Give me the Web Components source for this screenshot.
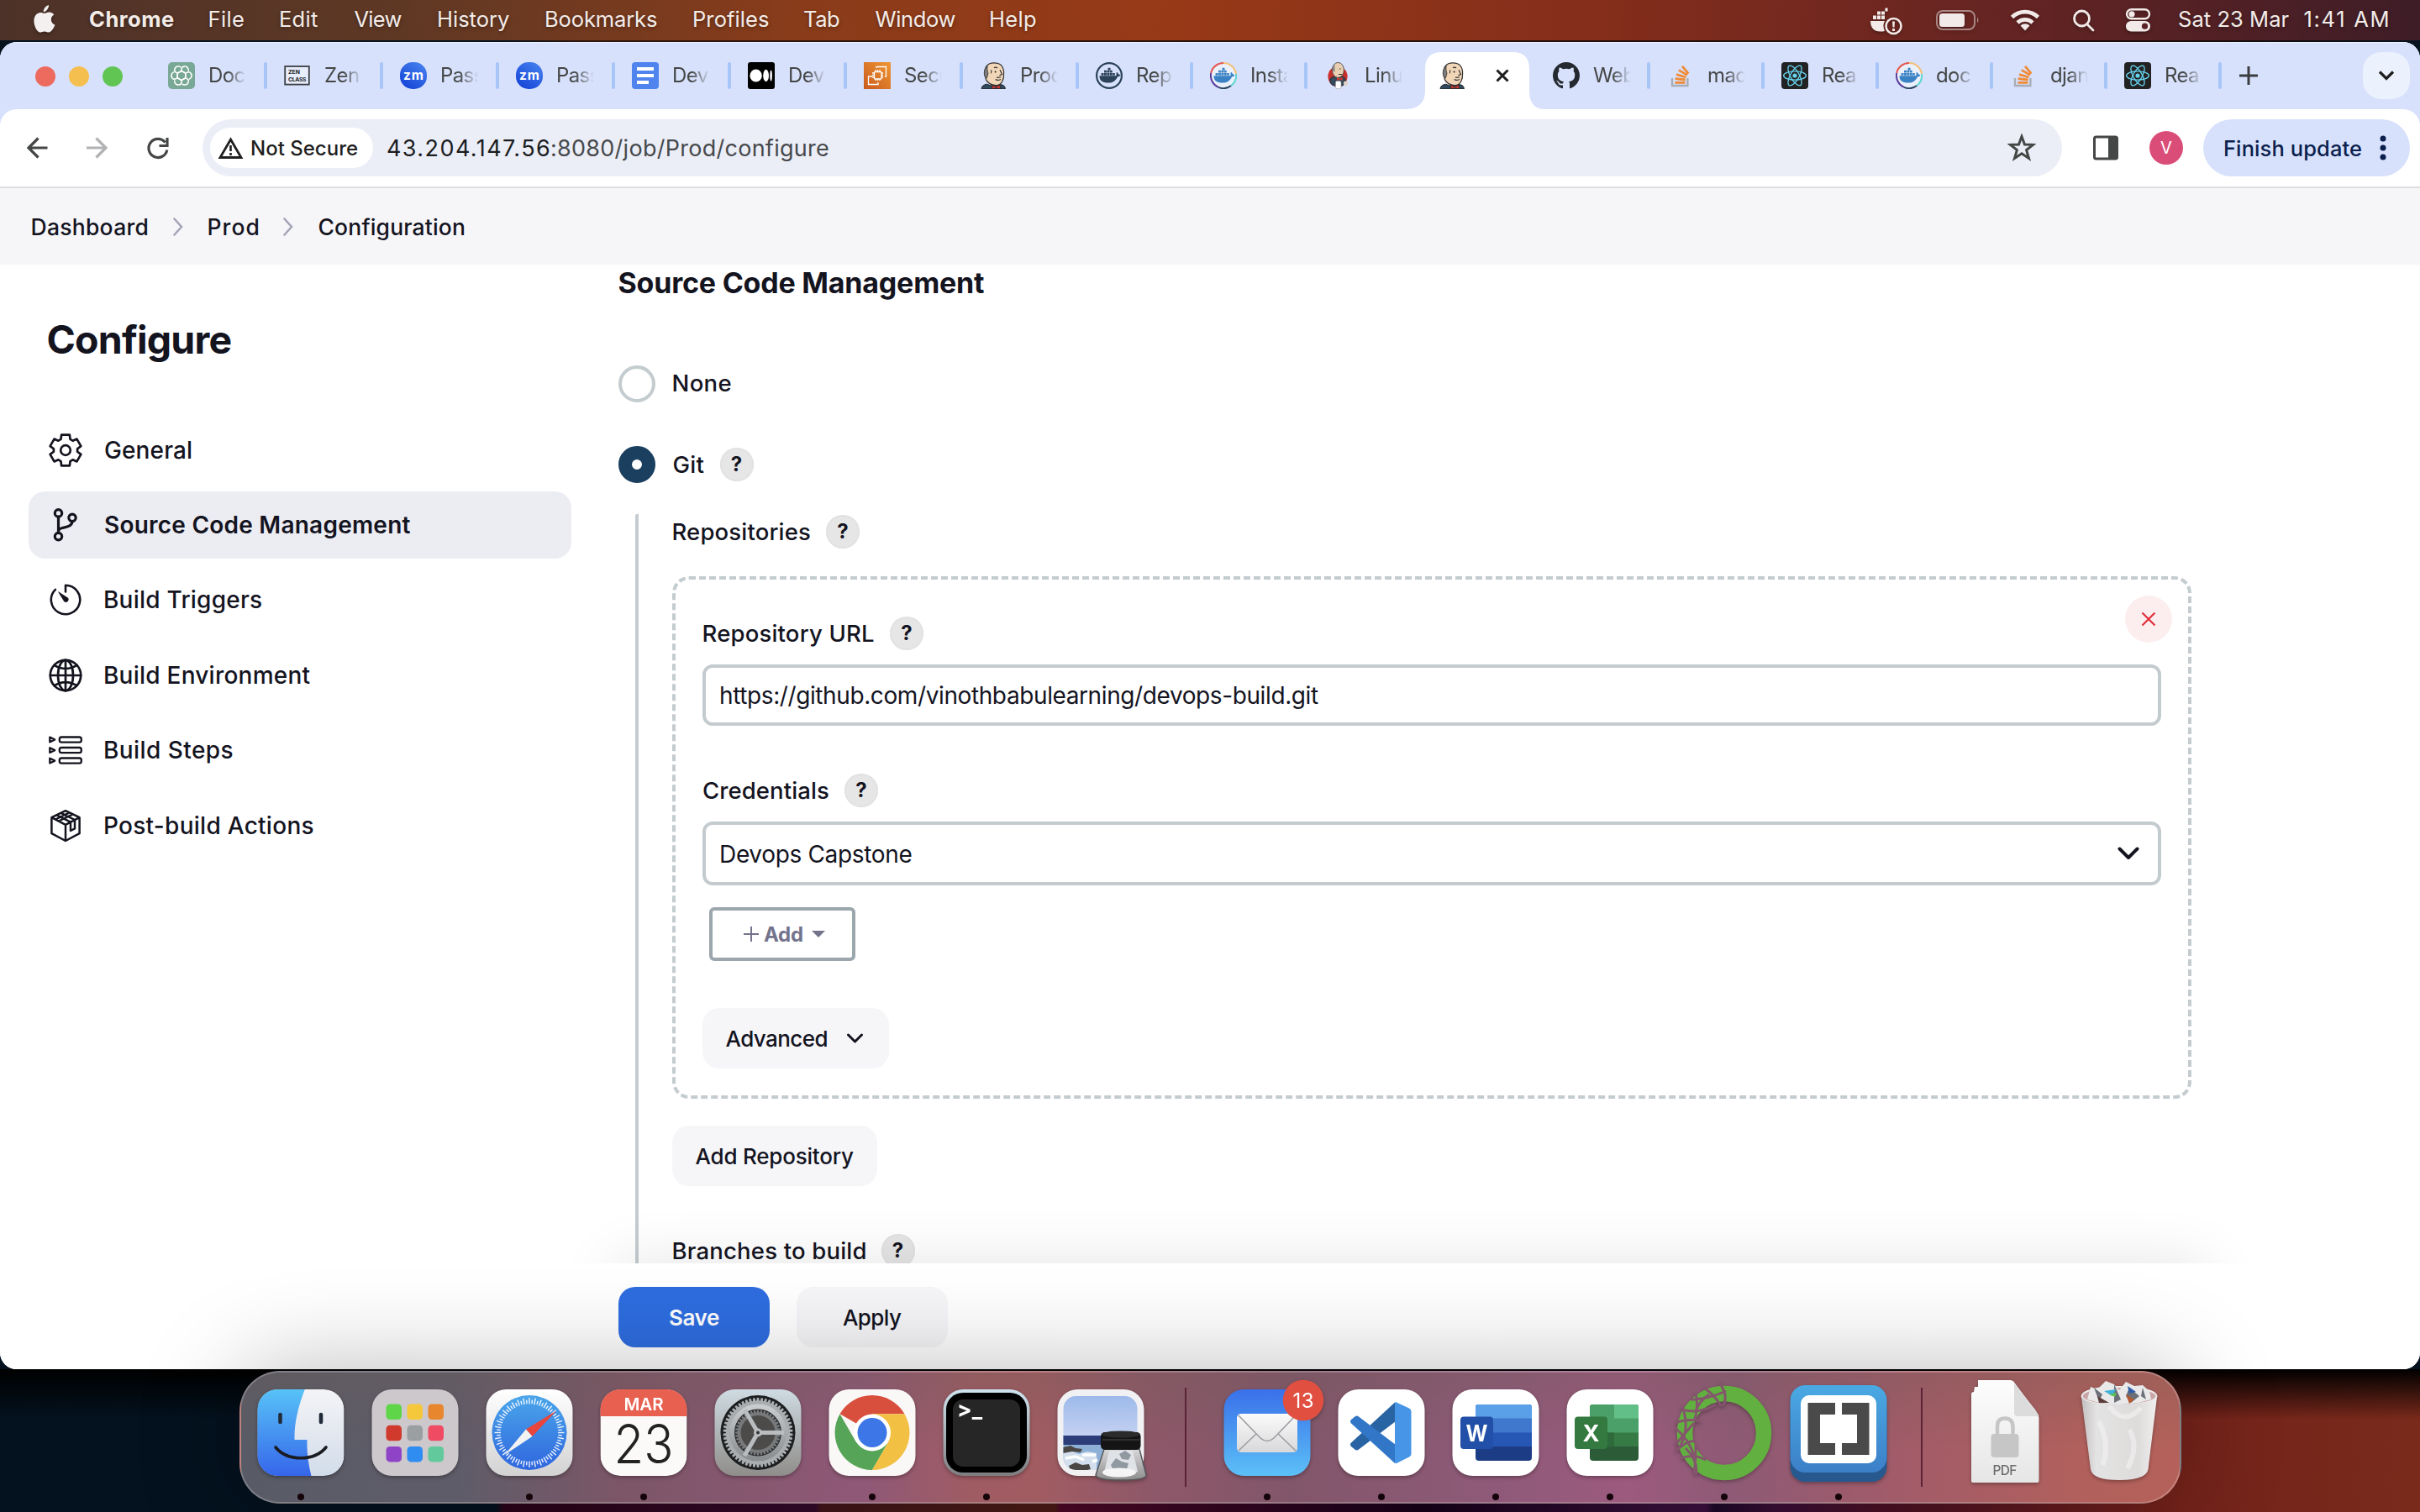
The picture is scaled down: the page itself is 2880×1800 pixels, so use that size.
<!DOCTYPE html>
<html lang="en">
<head>
<meta charset="utf-8">
<title>Prod Config [Jenkins]</title>
<style>
html,body{margin:0;padding:0}
body{width:2880px;height:1800px;overflow:hidden;font-family:Inter,"Noto Sans","Liberation Sans",sans-serif;font-optical-sizing:none;color:#14141f}
</style>
</head>
<body>
<mac-desktop></mac-desktop>
<script>
const define = (name, css, html, setup) => customElements.define(name, class extends HTMLElement {
  connectedCallback() {
    if (this.shadowRoot) return;
    const root = this.attachShadow({ mode: 'open' });
    const body = typeof html === 'function' ? html(this) : html;
    root.innerHTML = `<style>*{box-sizing:border-box}svg{display:block}${css}</style>${body}`;
    if (setup) setup(this, root);
  }
});

/* ---------- shapes ---------- */
const gear = (n, cx, cy, ro, ri, ao, ai, from = 0) => {
  let d = '';
  const p = (r, a) => `${(cx + r * Math.sin(a)).toFixed(2)} ${(cy - r * Math.cos(a)).toFixed(2)}`;
  for (let i = 0; i < n; i++) {
    const a = from + i * 2 * Math.PI / n;
    d += `${i ? 'L' : 'M'}${p(ri, a - ai)}L${p(ro, a - ao)}L${p(ro, a + ao)}L${p(ri, a + ai)}`;
  }
  return d + 'Z';
};
const whale = (c) => `<g fill="${c}"><path d="M4.5 16.3H23.6C24.6 16 25 14.8 24.4 13.2C24.6 12.4 25.2 12 25.5 12C26.6 12.8 27 13.8 27 14.6C28 14.5 29 14.8 29.5 15.2C28.8 16.6 27.6 17.3 26 17.2C24.2 21.8 20.6 24.6 14.6 24.6C8.4 24.6 4.2 22 4.5 16.3Z"/><path d="M6.6 13h2.9v2.8H6.6zM10 13h2.9v2.8H10zM13.4 13h2.9v2.8h-2.9zM16.8 13h2.9v2.8h-2.9zM20.2 13h2.6v2.8h-2.6zM10 9.8h2.9v2.8H10zM13.4 9.8h2.9v2.8h-2.9zM16.8 9.8h2.9v2.8h-2.9zM14.6 6.8h2.9v2.6h-2.9z"/></g>`;
const butler = `<path d="M2.2 32C2 28.5 4.6 26.8 8.5 26.2L13 28L24 26.5C28.5 27 30.4 28.8 30.2 32Z" fill="#2f4a5c" stroke="#222" stroke-width="1"/>
<path d="M6 15C5 6 9 .8 17 .8C25.5 .8 28.8 6 28.6 13.5C29 20 26.4 27.4 19.5 27.6C13.5 27.8 8.2 24 7.2 20Z" fill="#f0d6b7" stroke="#333" stroke-width="1.2"/>
<path d="M6 17C4.4 12.5 5.6 7.4 9.2 4.4C8.6 8 9 10.2 10 13.4L8.4 19Z" fill="#7d7d7d" stroke="#333" stroke-width=".8"/>
<path d="M17 6.6Q19.5 5.4 21 7M13.4 9.4Q14.6 11.6 13.2 13.4M24 9.2L26.6 14.4L23.4 16M18.6 20.6Q21.4 22.4 25 20.4M20 18.4L25 18" fill="none" stroke="#333" stroke-width="1.2"/>
<circle cx="18.6" cy="11.6" r="1" fill="#222"/>
<path d="M14.6 27.4L19 29.2L24 27.2L24.6 32L19.6 30.6L15 32Z" fill="#d33a33" stroke="#222" stroke-width=".7"/>`;
const dockerRing = `<circle cx="16" cy="16" r="15" fill="#eaf0fc"/><g fill="none" stroke-width="2"><path d="M16 1A15 15 0 0 1 31 14" stroke="#f5bf72"/><path d="M31 14A15 15 0 0 1 25 28" stroke="#5fd8d0"/><path d="M25 28A15 15 0 0 1 10 29.8" stroke="#2b4560"/><path d="M10 29.8A15 15 0 0 1 1.2 13" stroke="#5b3f9b"/><path d="M1.2 13A15 15 0 0 1 16 1" stroke="#e5574f"/></g>${whale('#3b82c4')}`;
const zoomI = `<defs><linearGradient id="z" x1="1" y1="0" x2=".3" y2="1"><stop offset="0" stop-color="#4a86f0"/><stop offset="1" stop-color="#1746d8"/></linearGradient></defs><rect width="32" height="32" rx="15" fill="url(#z)"/><text x="16" y="20.6" font-size="15.5" font-weight="700" fill="#fff" text-anchor="middle" textLength="24">zm</text>`;
const react = `<rect width="32" height="32" rx="4" fill="#222"/><g fill="none" stroke="#68d3ef" stroke-width="1.3"><ellipse cx="16" cy="16" rx="13.4" ry="5.2"/><ellipse cx="16" cy="16" rx="13.4" ry="5.2" transform="rotate(60 16 16)"/><ellipse cx="16" cy="16" rx="13.4" ry="5.2" transform="rotate(120 16 16)"/></g><circle cx="16" cy="16" r="2.6" fill="#68d3ef"/>`;
const stack = `<path d="M6 19V28H24.4V19" fill="none" stroke="#a9adb4" stroke-width="2.4"/><g stroke="#f08a35" stroke-width="2.8"><path d="M9.4 24.3H21.4M9.6 19.6L21.6 21M11 14.6L22.4 18M13.8 9.4L24 15.4M18 4.8L25.4 13.6" /></g>`;
const gpt = (() => { let s = ''; for (let i = 0; i < 6; i++) s += `<path d="M16 10.4L20.8 13.2V18.6M16 10.4V8.6C16 4.4 21.8 3.4 23.9 7.6C24.3 8.6 24.3 9.6 24.2 10.6" transform="rotate(${i * 60} 16 16)"/>`; return s; })();
const FAV = {
  gpt: `<rect width="32" height="32" rx="5" fill="#79a896"/><g fill="none" stroke="#fff" stroke-width="1.5">${gpt}</g>`,
  zen: `<rect x="1.2" y="5" width="28.6" height="21.6" fill="#e7edfb" stroke="#3c3f45" stroke-width="1.800"/><text x="5" y="13.6" font-size="6.800" font-weight="700" fill="#222">ZEN</text><text x="5" y="22.6" font-size="6.800" font-weight="700" fill="#222" textLength="21.500">CLASS</text>`,
  zoom: zoomI,
  docs: `<rect width="32" height="32" rx="4" fill="#4f83ee"/><path d="M6 6h20v4H6zM6 14h20v4H6zM6 22h14v4H6z" fill="#fff"/>`,
  medium: `<rect width="32" height="32" rx="3" fill="#000"/><ellipse cx="9.6" cy="16" rx="7.2" ry="7.6" fill="#fff"/><ellipse cx="21.6" cy="16" rx="3.4" ry="7.2" fill="#fff"/><ellipse cx="27.6" cy="16" rx="1.3" ry="6.6" fill="#fff"/>`,
  aws: `<defs><linearGradient id="a" x1="0" y1="1" x2="1" y2="0"><stop offset="0" stop-color="#c85b20"/><stop offset="1" stop-color="#ef9632"/></linearGradient></defs><rect width="32" height="32" fill="url(#a)"/><g fill="none" stroke="#fff" stroke-width="1.3"><rect x="12.500" y="11.500" width="8.500" height="8.500" rx="1"/><path d="M14 11V9M16.500 11V9M19 11V9M14 20v2M16.500 20v2M19 20v2M12 13h-2M12 15.500h-2M12 18h-2M21 13h2M21 15.500h2M21 18h2"/><path d="M15 7V5.500H26.500V17H25M10 17H5.500V26.500H17V24"/></g>`,
  butler,
  dockerDark: `<circle cx="16" cy="16" r="14.900" fill="none" stroke="#2b4257" stroke-width="2.200"/>${whale('#2b4257')}`,
  dockerRing,
  jenkins: `<ellipse cx="16" cy="17" rx="11.600" ry="12" fill="#c9302c"/><path d="M7 20Q9 16.500 15 17.500L22 17Q26 19 25.500 25L22 28H11Q6 26 7 20Z" fill="#34495a" stroke="#222" stroke-width=".7"/><ellipse cx="16.400" cy="9.400" rx="7" ry="9" fill="#e9cfb2" stroke="#444" stroke-width=".9"/><path d="M10 10Q9 4 12.500 1.800L12.500 12Z" fill="#888"/><path d="M17 14.500h4M18 8h1.500" stroke="#333"/><path d="M15 18l3 1.500l3.500-1.500v4l-3.500-1.500l-3 1.500z" fill="#d33a33"/><rect x="13.500" y="22.500" width="6.500" height="9.200" rx="1.500" fill="#fff" stroke="#999" stroke-width=".6"/><circle cx="25.500" cy="25" r="2.600" fill="#dfd3c8"/>`,
  github: `<path transform="scale(2)" fill="#24292f" d="M8 0C3.580 0 0 3.580 0 8c0 3.540 2.290 6.530 5.470 7.590.4.070.55-.17.55-.38 0-.19-.01-.82-.01-1.490-2.010.37-2.530-.49-2.690-.94-.09-.23-.48-.94-.82-1.130-.28-.15-.68-.52-.01-.53.63-.01 1.080.58 1.230.82.72 1.210 1.870.87 2.330.66.07-.52.28-.87.51-1.070-1.780-.2-3.640-.89-3.640-3.950 0-.87.31-1.590.82-2.150-.08-.2-.36-1.020.08-2.120 0 0 .67-.21 2.200.82.64-.18 1.320-.27 2-.27s1.360.09 2 .27c1.530-1.040 2.200-.82 2.200-.82.44 1.100.16 1.920.08 2.120.51.56.82 1.270.82 2.150 0 3.070-1.870 3.750-3.650 3.950.29.25.54.73.54 1.480 0 1.070-.01 1.930-.01 2.200 0 .21.15.46.55.38A8.010 8.010 0 0 0 16 8c0-4.420-3.580-8-8-8Z"/>`,
  stack, react
};
const S = (d, w = 3) => `<g fill="none" stroke="currentColor" stroke-width="${w}" stroke-linecap="round" stroke-linejoin="round">${d}</g>`;
const NAV = {
  gear: S(`<path d="${gear(6, 20, 20, 19, 14.2, .26, .4)}"/><circle cx="20" cy="20" r="5.800"/>`, 2.7),
  branch: S(`<circle cx="11.500" cy="5.900" r="4.200"/><circle cx="28" cy="11.300" r="4.200"/><circle cx="11.500" cy="33.600" r="4.200"/><path d="M11.500 10V29.400M28 15.500C28 21.500 21 22.500 16 23.500C13 24.200 11.500 25.500 11.500 28"/>`, 3.2),
  timer: S(`<path d="M20 10.500V2.800A17.200 17.200 0 1 1 7.900 7.800"/>`, 2.6) + `<path d="M11.200 10.800Q10.800 10 11.900 10.400L22.600 17.600A3.100 3.100 0 0 1 18.200 22Z" fill="currentColor"/>`,
  globe: S(`<circle cx="20" cy="20" r="18.200"/><ellipse cx="20" cy="20" rx="9" ry="18.200"/><path d="M20 1.800V38.200M1.800 20H38.200M6.600 7.800Q20 16 33.400 7.800M6.600 32.200Q20 24 33.400 32.200"/>`, 2.7),
  steps: S(`<rect x="12.800" y="4.500" width="26" height="6.200" rx="2.400"/><rect x="12.800" y="17" width="26" height="6.200" rx="2.400"/><rect x="12.800" y="29.500" width="26" height="6.200" rx="2.400"/><path d="M1.300 4.600V10.400L7.200 7.500ZM1.300 17.200V23L7.200 20.100ZM1.300 29.700V35.500L7.200 32.600Z"/>`, 2.3),
  box: S(`<path d="M20 2.200L36.600 10.200V29.200L20 38L3.400 29.200V10.200ZM3.400 10.200L20 18.800L36.600 10.200M20 18.800V38M9.500 7.400L26 15.600V26L31 23.400V13M14.500 4.900L31 13M12 14.500L28.500 6.400M8 12.500L24.500 4.400"/>`, 2.5)
};

/* Dock artwork: x is measured from the middle of the cell, y from the top of the dock. */
const tile = (f, x = '') => `<rect x="-51.500" y="22" width="103" height="103" rx="24" fill="${f}" ${x}/>`;
const lg = (id, a, b) => `<linearGradient id="${id}" x1="0" y1="0" x2="0" y2="1"><stop offset="0" stop-color="${a}"/><stop offset="1" stop-color="${b}"/></linearGradient>`;
const ticks = (() => { let s = ''; for (let i = 0; i < 72; i++) s += `<path d="M0 ${i % 2 ? -39 : -41.500}V${i % 2 ? -34.500 : -34}" transform="translate(0 73.500) rotate(${i * 5})"/>`; return s; })();
const pads = ['#5fd64a', '#f5c83c', '#e8862e', '#cf3a2c', '#9aa0a2', '#ef4c64', '#8f44c8', '#2f8df2', '#62c99c'];
const DOCK = {
  finder: `<defs>${lg('f', '#58c4f8', '#3564ea')}${lg('w', '#f4f4f6', '#d2dcea')}<clipPath id="c">${tile('#000')}</clipPath></defs><g clip-path="url(#c)">${tile('url(#w)')}<path d="M-52 20H5.500C-3 42 -8 62 -7.500 82H7.500C7 98 9 112 13 127H-52Z" fill="url(#f)"/></g><path d="M-24.500 52V61M24 52V61" stroke="#222b3a" stroke-width="4.600" stroke-linecap="round"/><path d="M-30 91C-16 108 16 108 30 91" fill="none" stroke="#1b1b22" stroke-width="3.600" stroke-linecap="round"/>`,
  launchpad: tile('#cdc8cc') + pads.map((c, i) => `<rect x="${-34.500 + (i % 3) * 25}" y="${39.500 + (i / 3 | 0) * 25.200}" width="18.500" height="18.500" rx="4.500" fill="${c}"/>`).join(''),
  safari: `<defs>${lg('s', '#ffffff', '#d2d2d2')}${lg('b', '#4aa6ea', '#2f66de')}</defs>${tile('url(#s)')}<circle cy="73.500" r="44.500" fill="url(#b)"/><g stroke="#fff" stroke-width="1.400" opacity=".9">${ticks}</g><path d="M32 47.500L-4 69.500L3.500 78Z" fill="#e8463c"/><path d="M-4 69.500L3.500 78L-29.500 100Z" fill="#f2f2f2"/>`,
  calendar: `<defs><clipPath id="c">${tile('#000')}</clipPath></defs><g clip-path="url(#c)">${tile('#fbfaf8')}<rect x="-52" y="22" width="104" height="32" fill="#e8604f"/></g><text y="46.500" font-size="20.500" font-weight="600" fill="#fff" text-anchor="middle" textLength="47">MAR</text><text y="110" font-size="64" font-weight="300" fill="#222" text-anchor="middle" textLength="71" lengthAdjust="spacingAndGlyphs">23</text>`,
  settings: `<defs>${lg('g', '#cfdbe2', '#8f8d8a')}${lg('h', '#c9ccce', '#8b8e90')}</defs>${tile('url(#g)')}<circle cy="73.500" r="44.500" fill="#1d1e20"/><path d="${gear(54, 0, 73.500, 41.500, 38, .03, .045)}" fill="#a9adb0"/><circle cy="73.500" r="33.500" fill="#2b2c2e"/><circle cy="73.500" r="31" fill="none" stroke="url(#h)" stroke-width="6"/><circle cy="73.500" r="24.500" fill="#3a3b3d"/><path d="${gear(40, 0, 73.500, 27, 24, .04, .06)}" fill="#77797b"/><circle cy="73.500" r="20.500" fill="#4c4b4a"/><g stroke="#b9bdc0" stroke-width="5"><path d="M0 73.500H31M0 73.500L-16 46M0 73.500L-16 101"/></g><circle cy="73.500" r="5" fill="#b9bdc0"/><circle cy="73.500" r="2" fill="#333"/>`,
  chrome: `${tile('#faf7f7')}<g transform="translate(0 73.500)"><path d="M0 0L-38.500 -22.250A44.500 44.500 0 0 1 38.500 -22.250L0 -22.250Z" fill="#d94f3d"/><path d="M-38.500 -22.250A44.500 44.500 0 0 0 0 44.500L19.300 11.100L-19.300 11.100Z" fill="#55a457"/><path d="M38.500 -22.250A44.500 44.500 0 0 1 0 44.500L19.300 11.100L0 -22.250Z" fill="#f2c043"/><circle r="22" fill="#fff"/><circle r="17.500" fill="#3d76e6"/></g>`,
  terminal: `<defs>${lg('t', '#cfe4ef', '#7e7e80')}</defs>${tile('url(#t)')}<rect x="-48" y="26" width="96" height="95" rx="20" fill="#000"/><rect x="-40" y="34" width="80" height="80" rx="12" fill="#262626"/><text x="-35" y="54.500" font-family="Liberation Mono" font-size="26" font-weight="700" fill="#fff">&gt;_</text>`,
  preview: `<defs>${lg('k', '#9db9ea', '#c5d2f2')}${lg('j', '#d8d8da', '#8e8e8e')}<clipPath id="c"><rect x="-44.500" y="30" width="88" height="88" rx="15"/></clipPath></defs>${tile('#f1f1f3')}<g clip-path="url(#c)"><rect x="-45" y="30" width="90" height="48" fill="url(#k)"/><rect x="-45" y="77" width="90" height="42" fill="#8fb0d6"/><rect x="-45" y="77" width="90" height="11" fill="#2c3c78"/><path d="M-45 98L-36 95L-26 99L-16 96L-5 98V119H-45Z" fill="#d3dfec"/><path d="M-45 91L-36 89L-30 92L-22 93L-24 97L-34 96L-45 98ZM-38 113L-30 109L-22 112L-14 111L-12 117L-20 119H-36Z" fill="#4a4644"/><path d="M-42 104L-30 102L-20 106M-22 100L-6 100M-10 108L-4 106" fill="none" stroke="#fff" stroke-width="3.500"/></g><path d="M4 93H46L54 124Q54 130 24 130Q-4 130 -6 124Z" fill="url(#j)" stroke="#55585c" stroke-width="1.500"/><path d="M10 95H38L44 120Q26 127 4 121Z" fill="#dfe3e8"/><path d="M22 99l7-4l7 5l-3 6l-8-1zM12 112l6-8l7 4l8 2l-2 7l-16 1z" fill="#9098a0"/><ellipse cx="22" cy="121" rx="20" ry="5.500" fill="#f5f5f5"/><rect x="0" y="73" width="47.500" height="21" rx="5" fill="#151515"/><ellipse cx="24" cy="75.500" rx="23" ry="4" fill="#2b2b2b"/><path d="M2 82H46" stroke="#3a3a3a" stroke-width="1.500"/>`,
  mail: `<defs>${lg('m', '#3970ea', '#5cc0f7')}${lg('e', '#fbfbfb', '#d8d8da')}</defs>${tile('url(#m)')}<rect x="-36" y="51" width="72" height="46" rx="5" fill="url(#e)"/><path d="M-34 95L-13 75M34 95L13 75M-34 53L-8 80Q0 87 8 80L34 53" fill="none" stroke="#9b9da0" stroke-width="1.600"/><circle cx="43" cy="35" r="24.300" fill="#e14f41"/><text x="43" y="43.500" font-size="24" fill="#fff" text-anchor="middle" textLength="25">13</text>`,
  vscode: `${tile('#fff')}<path d="M16 37.500L-36.500 86Q-38 88 -36 90L-31 94Q-29 95 -27 93.500L17 60Z" fill="#2863a4"/><path d="M16 110L-36.500 62Q-38 60 -36 58L-31 54Q-29 53 -27 54.500L17 88Z" fill="#3277c7"/><path d="M16 37.500Q17 37 18 37.500L33 44.500Q35.500 46 35.500 48V99Q35.500 101 33 102.500L18 110Q16 110.500 16 109V37.500Z" fill="#4795e6"/>`,
  word: `${tile('#fff')}<rect x="-24" y="40" width="67" height="67" rx="4" fill="#1c3d85"/><path d="M-24 90V44Q-24 40 -20 40H39Q43 40 43 44V90Z" fill="#2757b4"/><path d="M-24 73.500V44Q-24 40 -20 40H39Q43 40 43 44V73.500Z" fill="#3f78cc"/><path d="M-24 56.500V44Q-24 40 -20 40H39Q43 40 43 44V56.500Z" fill="#5aa0e8"/><rect x="-42" y="54.500" width="39" height="38.500" rx="4" fill="#2250a8"/><text x="-22.500" y="83.500" font-size="27" font-weight="700" fill="#fff" text-anchor="middle" textLength="26" lengthAdjust="spacingAndGlyphs">W</text>`,
  excel: `${tile('#fff')}<rect x="-24" y="40" width="58" height="67" rx="4" fill="#2b5c37"/><path d="M-24 90V44Q-24 40 -20 40H30Q34 40 34 44V90Z" fill="#367a45"/><path d="M-24 73.500V44Q-24 40 -20 40H5V73.500Z" fill="#4b9f68"/><path d="M5 73.500V40H30Q34 40 34 44V73.500Z" fill="#4b9f68"/><path d="M5 56.500V40H30Q34 40 34 44V56.500Z" fill="#63bf88"/><path d="M-24 73.500H5V90H-24Z" fill="#2e6a3c"/><rect x="-42" y="54.500" width="39" height="38.500" rx="4" fill="#34793f"/><text x="-22.500" y="83.500" font-size="27" font-weight="700" fill="#fff" text-anchor="middle">X</text>`,
  anaconda: `<circle cy="74" r="47" fill="none" stroke="#62b03f" stroke-width="18.500"/><g fill="none" stroke="#85556e" stroke-width="3"><path d="M-6 14Q6 30 -2 42M-24 20Q-10 30 -4 42M-40 34Q-20 34 2 24M-50 46Q-30 52 -10 40M-34 26Q-30 44 -36 60M-58 62Q-44 56 -28 60M-50 42Q-40 70 -54 92M-58 68Q-40 84 -36 102M-36 62Q-50 78 -58 88M-58 96Q-44 82 -36 84M-52 104Q-36 98 -22 106M-46 92Q-30 108 -34 124M-34 88Q-34 110 -36 122M-18 28Q-30 36 -34 48"/></g>`,
  brackets: `<defs>${lg('r', '#4aa9e2', '#3c7fc8')}</defs><rect x="-57.500" y="30" width="115" height="102" rx="18" fill="#27598f"/><rect x="-57.500" y="17" width="115" height="104" rx="18" fill="url(#r)"/><rect x="-45" y="29" width="90" height="81" rx="10" fill="#fff"/><path d="M-36.500 38H-4V52H-22V86H-4V100H-36.500ZM36.500 38H4V52H22V86H4V100H36.500Z" fill="#4a4a4a"/>`,
  pdf: `<defs>${lg('p', '#fdfdfd', '#e6e6e6')}</defs><path d="M-32 11H5L12 24H-36V19H-32Z" fill="#ececec"/><path d="M-40 28Q-40 25 -37 25L-36 19H-32V11H6Q10 11 12 15L37 48Q40.500 52 40.500 56V131Q40.500 133 38.500 133H-38Q-40 133 -40 131Z" fill="url(#p)"/><path d="M11 15V50Q11 54 15 54H40.500Q38 50 36 46Z" fill="#dcdcdc"/><path d="M-9 76V66Q-9 56.500 0 56.500T9.500 66V76" fill="none" stroke="#c6c6c6" stroke-width="4.500"/><rect x="-16.500" y="75" width="33" height="28" rx="4" fill="#c6c6c6"/><text y="123.500" font-size="15.500" font-weight="500" fill="#6d6d6d" text-anchor="middle" textLength="29">PDF</text>`,
  trash: `<defs><linearGradient id="q"><stop offset="0" stop-color="#c3bfc0"/><stop offset=".2" stop-color="#e4e3e3"/><stop offset=".75" stop-color="#dddcdb"/><stop offset="1" stop-color="#f0eeee"/></linearGradient></defs><ellipse cy="30" rx="44.500" ry="11" fill="#c9a5a6" stroke="#eee" stroke-width="2"/><path d="M-38 34L-34 19L-26 22L-16 12L-6 16L0 23L8 13L18 18L28 17L36 24L38 34Q0 46 -38 34Z" fill="#e9e9ea"/><path d="M-30 20L-20 28L-24 36ZM-6 16L2 34L-6 38ZM12 20L24 30L14 38L8 30ZM28 20L32 34L26 30Z" fill="#6b6f78"/><path d="M-18 24L-4 22L-8 30Z" fill="#3fb0d8"/><path d="M-12 28L-3 26L-5 31Z" fill="#5dc050"/><path d="M8 28L18 34L12 39Z" fill="#b55a33"/><path d="M10 18L20 25L12 27Z" fill="#2f5ca8"/><path d="M-26 30L-12 38H-24Z" fill="#5a3c3c"/><path d="M-45 31Q-40 40 0 40T45 31L34.500 117Q32 130 0 130T-34 117Z" fill="url(#q)"/><path d="M-12 42Q6 66 26 44M-24 60Q-10 90 -20 112M12 70Q24 90 10 116" fill="none" stroke="#f3f2f2" stroke-width="6" opacity=".6"/>`
};

/* ---------- primitives ---------- */
define('tab-icon', ':host{display:block;width:32px;height:32px;flex:none}text{font-family:Inter,sans-serif}',
  el => `<svg width="32" height="32" viewBox="0 0 32 32">${FAV[el.getAttribute('name')]}</svg>`);
define('help-dot', `:host{display:flex;width:40px;height:40px;border-radius:50%;background:#e6e6e6;align-items:center;justify-content:center;font-size:24px;font-weight:700;line-height:40px;flex:none;box-shadow:inset 0 0 0 2px #e2e2e2}`, '<span>?</span>');
define('soft-button', `:host{display:flex;height:72px;border-radius:20px;background:#f6f6f9;align-items:center;font-size:26px;font-weight:500;flex:none;padding-top:1px;box-sizing:border-box}
:host([primary]){background:#2e6de0;color:#fff;font-weight:600}`, '<slot></slot>');
define('radio-mark', `:host{display:block;width:44px;height:44px;border-radius:50%;border:4px solid #c4cccf;box-sizing:border-box;background:#fff;flex:none}
:host([checked]){border:16px solid #1b3f5f}`, '');
define('field-label', `:host{display:flex;height:40px;align-items:center;gap:19px;font-size:27.500px;font-weight:500}`, '<slot></slot><help-dot></help-dot>');
define('text-field', `:host{display:flex;align-items:center;justify-content:space-between;border:4px solid #c4cbcf;border-radius:12px;box-sizing:border-box;padding:0 22px 0 18px;font-size:28px;background:#fff}`, '<slot></slot>');

/* ---------- menu bar ---------- */
define('menu-bar', `:host{display:flex;height:48px;align-items:center;padding:0 0 2px 40px;box-sizing:border-box;color:#f3ece8;font-size:25.500px;line-height:46px;text-shadow:0 2px 4px rgba(0,0,0,.35);background:linear-gradient(90deg,#4d3229 0,#5f3824 480px,#8a3c1a 960px,#973917 1400px,#832d1b 1920px,#642423 2400px,#3e1d27 2880px)}
.m{display:flex;flex:none}.b{font-weight:700}.g{flex:none}svg{filter:drop-shadow(0 2px 2px rgba(0,0,0,.3))}`,
  () => {
    const items = [['Chrome', 107, 100, 1], ['File', 249.500, 40.500], ['Edit', 334, 44], ['View', 421.500, 56], ['History', 522, 84], ['Bookmarks', 650, 132], ['Profiles', 826, 89], ['Tab', 957, 42], ['Window', 1041.500, 95], ['Help', 1179, 54]];
    return `<svg width="67" height="34" viewBox="0 0 67 34" style="flex:none"><path fill="#f3f0ef" d="M18 0C18.300 3.600 15.200 8 11.800 8.200C11.400 4.600 14.800 .6 18 0ZM12.600 9.800C14.200 9.800 16 8.400 18.600 8.400C20.800 8.400 23 9.600 24.300 11.400C19.200 14.300 20 21.600 25.400 23.600C24.200 27.200 21.200 32.600 18 32.600C16 32.600 15.200 31.400 12.900 31.400C10.500 31.400 9.600 32.600 7.800 32.600C4.400 32.600 .4 25.400 .4 19C.4 12.600 4.400 9 8.200 9C10.200 9 11.500 9.800 12.600 9.800Z"/></svg>` +
      items.map((m, i) => `<span class="m ${m[3] ? 'b' : ''}" style="width:${(items[i + 1] ? items[i + 1][1] : 2226) - m[1]}px"><fit-text w="${m[2]}">${m[0]}</fit-text></span>`).join('') +
      `<svg class="g" width="367" height="46" viewBox="2226 0 367 46"><g fill="#f1eae8"><path d="M2226 25H2243Q2240 30 2243 37Q2232 39 2228 33Q2226 30 2226 25Z"/><path d="M2229 18.500h4v4.500h-4zM2234 18.500h4v4.500h-4zM2239 18.500h4v4.500h-4zM2234 13.500h4v4h-4zM2239 13.500h4v4h-4zM2243.500 9.500h3v4h-3z"/><circle cx="2253.500" cy="31" r="9" fill="none" stroke="#f1eae8" stroke-width="2.600"/><path d="M2252 25.500h3l-.5 7h-2zM2252 34h3v3h-3z"/><rect x="2308" y="16" width="30" height="16" rx="3.500"/><path d="M2353 20.500Q2356 24 2353 27.500Z" opacity=".5"/></g><rect x="2305" y="13" width="45" height="22" rx="7" fill="none" stroke="#f1eae8" stroke-opacity=".5" stroke-width="2"/><g fill="none" stroke="#f1eae8" stroke-width="4.600"><path d="M2394.500 20.500A22 22 0 0 1 2425.500 20.500"/><path d="M2401 27A13 13 0 0 1 2419 27"/></g><path d="M2404.500 30.500A8 8 0 0 1 2415.500 30.500L2410 36.500Z" fill="#f1eae8"/><g fill="none" stroke="#f1eae8" stroke-width="2.800" stroke-linecap="round"><circle cx="2477.500" cy="22" r="9"/><path d="M2484 29L2491 36"/></g><rect x="2531" y="11.300" width="27" height="11" rx="5.500" fill="none" stroke="#f1eae8" stroke-width="2.400"/><circle cx="2537" cy="16.800" r="3.600" fill="#f1eae8"/><rect x="2530" y="25" width="29" height="12.500" rx="6.200" fill="#f1eae8"/><circle cx="2552.500" cy="31.200" r="3.600" fill="#5a2226"/></svg>` +
      `<span class="m" style="width:149.500px"><fit-text w="131.500">Sat 23 Mar</fit-text></span><span class="m"><fit-text w="99">1:41 AM</fit-text></span>`;
  });

/* ---------- browser chrome ---------- */
define('browser-tab', `:host{display:flex;width:138px;height:80px;align-items:center;flex:none;font-size:24px;color:#454746}
:host([narrow]){width:136px}
.sep{width:4px;height:32px;border-radius:2px;background:#a8c5f8;margin-right:20px}:host([first]) .sep{background:none}
.t{width:45px;margin-left:16px;overflow:hidden;white-space:nowrap;line-height:40px;letter-spacing:-.6px;-webkit-mask-image:linear-gradient(90deg,#000 50%,transparent 100%);mask-image:linear-gradient(90deg,#000 50%,transparent 100%)}`,
  el => `<div class="sep"></div><tab-icon name="${el.getAttribute('icon')}"></tab-icon><div class="t"><slot></slot></div>`);
define('active-tab', `:host{display:block;width:136px;height:80px;flex:none;position:relative}
svg.bg{position:absolute;left:-17px;top:0}
.c{position:relative;display:flex;align-items:center;height:80px;padding-left:24px;gap:36px}`,
  `<svg class="bg" width="168" height="80" viewBox="0 0 168 80"><path d="M0 80Q25 80 25 58V32Q25 12 45 12H129Q149 12 149 32V58Q149 80 168 80Z" fill="#fff"/></svg><div class="c"><tab-icon name="butler"></tab-icon><svg width="16" height="16" viewBox="0 0 16 16"><path d="M1.500 1.500L14.500 14.500M14.500 1.500L1.500 14.500" stroke="#1f1f1f" stroke-width="3"/></svg></div>`);
define('tab-strip', `:host{display:flex;height:80px;align-items:center;background:#d7e1fc;flex:none;box-shadow:inset 0 1px #eef3ff;box-sizing:border-box}
.l{width:176px;padding-left:42px;display:flex;gap:16px;flex:none;margin-top:2px}.l i{width:24px;height:24px;border-radius:50%}
.sep{width:4px;height:32px;border-radius:2px;background:#a8c5f8}
.p{margin-left:21px}.d{margin-left:auto;margin-right:12px;width:56px;height:56px;border-radius:22px;background:#ebf2fd;display:grid;place-items:center}`,
  `<div class="l"><i style="background:#ed6a5e"></i><i style="background:#f5bf4f"></i><i style="background:#61c554"></i></div>
  <browser-tab first icon="gpt">Doc</browser-tab><browser-tab icon="zen">Zen</browser-tab><browser-tab icon="zoom">Pass</browser-tab><browser-tab icon="zoom">Pass</browser-tab><browser-tab icon="docs">Dev</browser-tab><browser-tab icon="medium">Dev</browser-tab><browser-tab icon="aws">Secu</browser-tab><browser-tab icon="butler">Prod</browser-tab><browser-tab narrow icon="dockerDark">Rep</browser-tab><browser-tab narrow icon="dockerRing">Insta</browser-tab><browser-tab narrow icon="jenkins">Linu</browser-tab><active-tab></active-tab><browser-tab narrow first icon="github">Web</browser-tab><browser-tab narrow icon="stack">mac</browser-tab><browser-tab narrow icon="react">Rea</browser-tab><browser-tab narrow icon="dockerRing">doc</browser-tab><browser-tab narrow icon="stack">djan</browser-tab><browser-tab narrow icon="react">Rea</browser-tab><div class="sep"></div>
  <svg class="p" width="22" height="22" viewBox="0 0 22 22"><path d="M11 0V22M0 11H22" stroke="#3c3d40" stroke-width="3"/></svg>
  <div class="d"><svg width="20" height="14" viewBox="0 0 20 14"><path d="M2 2.500L10 10.500L18 2.500" fill="none" stroke="#1f1f1f" stroke-width="3.200"/></svg></div>`);
define('tool-bar', `:host{display:block;background:#d7e1fc;flex:none}
.w{height:94px;background:#fff;border-bottom:2px solid #dedee1;border-radius:20px 20px 0 0;display:flex;align-items:center}
.o{width:2213px;height:68px;border-radius:34px;background:#ebeef7;display:flex;align-items:center;padding:0 31px 0 9px;font-size:27px;flex:none}
.chip{width:194px;height:48px;border-radius:24px;background:#fff;display:flex;align-items:center;padding-left:9px;font-size:24px;font-weight:500;color:#1f1f1f;flex:none}
.u{display:flex;margin-left:17px;color:#1c1d1f}.u .r{color:#47494c;margin-left:3px}
.av{width:40px;height:40px;border-radius:50%;background:#da4d78;color:#fff;font-size:20px;display:grid;place-items:center;margin-left:37px}
.f{margin-left:24px;width:246px;height:68px;border-radius:34px;background:#d7e1fc;display:flex;align-items:center;padding-left:26px;font-size:25.500px;font-weight:500;color:#0b1f4d}`,
  `<div class="w"><svg width="241" height="40" viewBox="0 0 241 40" style="flex:none"><g fill="none" stroke-width="3.200"><path d="M56.500 20H34.500M45.500 8.500L34 20L45.500 31.500" stroke="#454746"/><path d="M103 20H125M114.500 8.500L126 20L114.500 31.500" stroke="#b1b2b4"/><path d="M196.500 13.500A11 11 0 1 0 198.800 22.500M199 8V17.500H189.500" stroke="#454746"/></g></svg>
  <div class="o"><div class="chip"><svg width="40" height="28" viewBox="0 0 40 28"><path d="M15.500 4L28 25.500H3Z" fill="none" stroke="#1f1f1f" stroke-width="2.800"/><path d="M15.500 11V18M15.500 20V23" stroke="#1f1f1f" stroke-width="2.600"/></svg><fit-text w="126">Not Secure</fit-text></div>
  <div class="u"><fit-text w="193">43.204.147.56</fit-text><span class="r"><fit-text w="329">:8080/job/Prod/configure</fit-text></span></div>
  <svg style="margin-left:auto" width="34" height="34" viewBox="0 0 34 34"><path d="M17 3.500L20.500 13L30.500 13.300L22.600 19.600L25.500 29.500L17 23.800L8.500 29.500L11.400 19.600L3.500 13.300L13.500 13Z" fill="none" stroke="#454746" stroke-width="3"/></svg></div>
  <svg style="margin-left:37px" width="30" height="30" viewBox="0 0 30 30"><rect x="1.500" y="2" width="27" height="26" rx="2" fill="#fff" stroke="#454746" stroke-width="3"/><path d="M18 2H28V28H18Z" fill="#454746"/></svg>
  <div class="av"><span>V</span></div>
  <div class="f"><fit-text w="162">Finish update</fit-text><svg style="margin-left:22px" width="8" height="32" viewBox="0 0 8 32"><g fill="#0b1f4d"><circle cx="4" cy="5" r="3.500"/><circle cx="4" cy="16" r="3.500"/><circle cx="4" cy="27" r="3.500"/></g></svg></div></div>`);

/* ---------- Jenkins page ---------- */
define('bread-crumbs', `:host{display:flex;height:91px;background:#f6f6f9;align-items:center;padding-left:38.500px;font-size:26.500px;font-weight:500;flex:none}svg{flex:none}`,
  (() => { const c = m => `<svg style="margin:${m}" width="12" height="22" viewBox="0 0 12 22"><path d="M1.500 1.500L10 11L1.500 20.500" fill="none" stroke="#a5a5b8" stroke-width="2.600" stroke-linecap="round"/></svg>`; return `<fit-text w="137">Dashboard</fit-text>${c('0 30.500px')}<fit-text w="59">Prod</fit-text>${c('0 30.500px 0 29.500px')}<fit-text w="173.500">Configuration</fit-text>`; })());
define('nav-item', `:host{display:flex;height:80px;width:646px;border-radius:20px;align-items:center;font-size:28px;font-weight:500;box-sizing:border-box;padding-left:24px}
:host([active]){background:#ecedf3;font-weight:600}svg{margin-right:27px;flex:none}`,
  el => `<svg width="40" height="40" viewBox="0 0 40 40">${NAV[el.getAttribute('icon')]}</svg><slot></slot>`);
define('side-nav', `:host{display:block;width:736px;flex:none;padding:60px 0 0 34px;box-sizing:border-box}
.h{font-size:46.500px;font-weight:700;line-height:58px;padding-left:23.500px;height:58px;display:flex}
nav{margin-top:62.600px;display:flex;flex-direction:column;gap:9.400px}`,
  `<div class="h"><fit-text w="217">Configure</fit-text></div><nav>
  <nav-item icon="gear"><fit-text w="103">General</fit-text></nav-item>
  <nav-item icon="branch" active><fit-text w="363.500">Source Code Management</fit-text></nav-item>
  <nav-item icon="timer"><fit-text w="186">Build Triggers</fit-text></nav-item>
  <nav-item icon="globe"><fit-text w="243.500">Build Environment</fit-text></nav-item>
  <nav-item icon="steps"><fit-text w="151.500">Build Steps</fit-text></nav-item>
  <nav-item icon="box"><fit-text w="247.500">Post-build Actions</fit-text></nav-item></nav>`);
define('repo-card', `:host{display:block;position:relative;margin-top:32px;width:1808px;height:622px;border:4px dashed #c4cccf;border-radius:20px;box-sizing:border-box;padding:44px 32px 0}
.x{position:absolute;right:19px;top:19px;width:56px;height:56px;border-radius:50%;background:#fceeef;display:grid;place-items:center}
.add{margin:26px 0 0 8px;width:174px;height:64px;border:4px solid #9ba6ad;border-radius:6px;display:flex;align-items:center;padding-left:37px;color:#73738c;font-size:24px;font-weight:700}`,
  `<div class="x"><svg width="18" height="18" viewBox="0 0 18 18"><path d="M1.500 1.500L16.500 16.500M16.500 1.500L1.500 16.500" stroke="#e0303a" stroke-width="2.200"/></svg></div>
  <field-label><fit-text w="202.500" style="margin-left:1.500px">Repository URL</fit-text></field-label>
  <text-field style="margin-top:17px;height:73px"><fit-text w="711">https://github.com/vinothbabulearning/devops-build.git</fit-text></text-field>
  <field-label style="margin-top:57px"><fit-text w="149" style="margin-left:1px">Credentials</fit-text></field-label>
  <text-field style="margin-top:17px;height:76px"><fit-text w="226.500" style="padding-top:1px">Devops Capstone</fit-text><svg width="26" height="18" viewBox="0 0 26 18"><path d="M2.500 3.500L13 14L23.500 3.500" fill="none" stroke="#14141f" stroke-width="4" stroke-linecap="round" stroke-linejoin="round"/></svg></text-field>
  <div class="add"><svg width="24" height="20" viewBox="0 0 24 20"><path d="M9 1V19M0 10H18" stroke="#73738c" stroke-width="2"/></svg><fit-text w="46">Add</fit-text><svg style="margin-left:11px" width="16" height="8" viewBox="0 0 16 8"><path d="M0 0H16L8 8Z" fill="#73738c"/></svg></div>
  <soft-button style="margin-top:56px;width:222px;padding-left:27.500px"><fit-text w="121">Advanced</fit-text><svg style="margin-left:23px" width="19" height="13" viewBox="0 0 19 13"><path d="M1.500 2L9.500 10L17.500 2" fill="none" stroke="#14141f" stroke-width="3" stroke-linecap="round" stroke-linejoin="round"/></svg></soft-button>`);
define('scm-form', `:host{display:block;width:1872px;height:1189px}
.h{height:43px;display:flex;align-items:center;font-size:34px;font-weight:700;line-height:43px}
.r{display:flex;height:44px;align-items:center;font-size:27.500px;font-weight:500}
.r radio-mark{margin-right:21.500px}
.g{margin:37px 0 0 20px;border-left:4px solid #c4cccf;border-radius:2px 0 0 0;padding-left:40px;height:892px}`,
  `<div class="h"><fit-text w="434.500" style="margin-left:.5px">Source Code Management</fit-text></div>
  <div class="r" style="margin-top:77px"><radio-mark></radio-mark><fit-text w="68" style="padding-bottom:1.500px">None</fit-text></div>
  <div class="r" style="margin-top:52px"><radio-mark checked></radio-mark><field-label><fit-text w="36">Git</fit-text></field-label></div>
  <div class="g"><field-label style="height:42px"><fit-text w="162.500" style="margin-left:1.500px">Repositories</fit-text></field-label>
  <repo-card></repo-card>
  <soft-button style="margin-top:32px;width:244px;padding-left:27.500px"><fit-text w="188.500">Add Repository</fit-text></soft-button>
  <field-label style="margin-top:57px"><fit-text w="228" style="margin-left:1.500px">Branches to build</fit-text></field-label></div>`);
define('action-bar', `:host{display:block;height:126px;flex:none;position:relative;background:#fff}
.sh{position:absolute;left:640px;right:180px;top:-70px;height:70px;overflow:hidden}
.sh i{position:absolute;left:92px;right:74px;top:70px;height:126px;box-shadow:0 0 72px rgba(0,0,0,.11)}
.b{display:flex;gap:32px;padding:28px 0 0 736px}`,
  `<div class="sh"><i></i></div><div class="b"><soft-button primary style="width:180px;padding-left:61px"><fit-text w="59">Save</fit-text></soft-button><soft-button style="width:180px;padding-left:55px"><fit-text w="70">Apply</fit-text></soft-button></div>`);
define('browser-window', `:host{display:flex;flex-direction:column;height:1580px;border-radius:20px;overflow:hidden;background:#fff;flex:none;margin-top:2px}
.c{display:flex;height:1189px;overflow:hidden;flex:none}`,
  `<tab-strip></tab-strip><tool-bar></tool-bar><bread-crumbs></bread-crumbs><div class="c"><side-nav></side-nav><scm-form></scm-form></div><action-bar></action-bar>`);

/* ---------- dock ---------- */
define('dock-item', `:host{display:flex;flex-direction:column;align-items:center;width:136px;height:158px;flex:none}
svg{filter:drop-shadow(0 2px 2px rgba(0,0,0,.3))}text{font-family:Inter,sans-serif}
i{width:8px;height:8px;border-radius:50%;background:transparent;margin-top:4px}:host([open]) i{background:#14040a}`,
  el => `<svg width="136" height="142" viewBox="-68 0 136 142">${DOCK[el.getAttribute('app')]}</svg><i></i>`);
define('mac-dock', `:host{display:flex;width:2311px;height:158px;margin:2px auto 0 285px;border-radius:48px;padding-left:3px;box-sizing:border-box;border:2px solid rgba(255,255,255,.22);position:relative;
background:linear-gradient(180deg,rgba(110,90,85,.3),transparent 60%),linear-gradient(90deg,#585b66 0,#5f5c69 260px,#7c5667 450px,#8f5877 740px,#a05c63 870px,#a15c62 950px,#8e5869 1080px,#82566a 1250px,#8f5a79 1500px,#9c5a7e 1650px,#8e5a75 1780px,#a05b6a 1950px,#b2605c 2200px,#b5615a 2311px);box-shadow:0 0 120px rgba(0,0,0,.28)}
:host>*{margin-top:-2px}.v{width:62px;display:flex;justify-content:center;flex:none;padding-top:20px}.v i{width:2.500px;height:118px;background:#5a2337}.v.a{padding-left:4px}`,
  `${[['finder', 1], ['launchpad'], ['safari', 1], ['calendar', 1], ['settings'], ['chrome', 1], ['terminal', 1], ['preview'], 'a', ['mail', 1], ['vscode', 1], ['word', 1], ['excel', 1], ['anaconda', 1], ['brackets', 1], 'b', ['pdf'], ['trash']].map(a => Array.isArray(a) ? `<dock-item app="${a[0]}" ${a[1] ? 'open' : ''}></dock-item>` : `<div class="v ${a}"><i></i></div>`).join('')}`);
define('mac-desktop', `:host{display:flex;flex-direction:column;width:2880px;height:1800px;overflow:hidden;
background:linear-gradient(180deg,#000 0,transparent 60px) 0 1630px/100% 60px no-repeat,
linear-gradient(90deg,#04121f 0,#04121f 590px,#2b0318 600px,#340a2b 970px,#42161a 978px,#4c1b16 1255px,#4d0828 1262px,#17021a 1700px,#3d1140 2030px,#1d0a28 2040px,#3a0e38 2110px,#4c1024 2250px,#74231a 2600px,#7a2a1b 2880px) 0 1630px/100% 170px no-repeat,
linear-gradient(90deg,#04121f,#04121f 600px,#30150c 700px,#1a0a08 2600px,#04121f)}`,
  '<menu-bar></menu-bar><browser-window></browser-window><mac-dock></mac-dock>');

/* Text run whose tracking is adjusted so that its ink spans exactly w pixels. */
const pen = document.createElement('canvas').getContext('2d');
define('fit-text', ':host{display:block;white-space:pre;flex:none}span{display:inline-block}', '<span><slot></slot></span>', (el, root) => {
  const cs = getComputedStyle(el), w = parseFloat(el.getAttribute('w')), t = el.textContent;
  pen.font = `${cs.fontWeight} ${cs.fontSize} ${cs.fontFamily}`;
  const m = pen.measureText(t), bearing = m.width - m.actualBoundingBoxLeft - m.actualBoundingBoxRight;
  const s = root.querySelector('span');
  const advance = s.getBoundingClientRect().width || m.width;
  el.style.width = w + 'px';
  s.style.marginLeft = m.actualBoundingBoxLeft + 'px';
  s.style.letterSpacing = ((w + bearing - advance) / (t.length - 1)).toFixed(3) + 'px';
});
</script>
</body>
</html>
